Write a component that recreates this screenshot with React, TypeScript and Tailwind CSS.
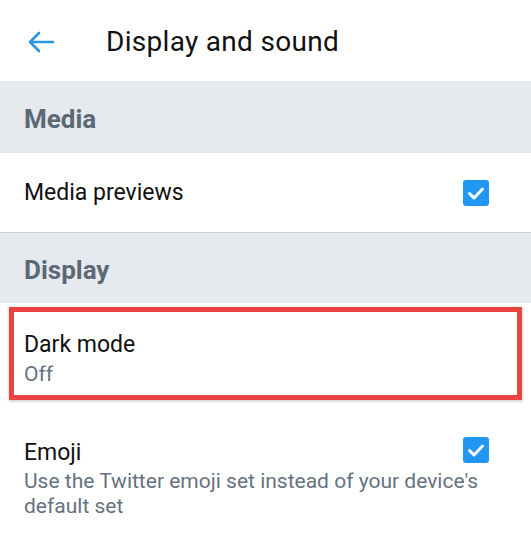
import React from "react";

function Check() {
  return (
    <div className="w-[26px] h-[26px] rounded-[3px] bg-[#2196f3] flex items-center justify-center shrink-0">
      <svg width="22" height="22" viewBox="0 0 22 22" fill="none">
        <path d="M4.5 11.5l4.5 4.5 8.5-9" stroke="white" strokeWidth="3" strokeLinecap="round" strokeLinejoin="round" />
      </svg>
    </div>
  );
}

export default function App() {
  return (
    <div className="w-[531px] h-[540px] bg-white overflow-hidden relative" style={{ fontFamily: "Roboto, 'Noto Sans', sans-serif" }}>
      {/* Header */}
      <div className="h-[81px] flex items-center pt-[2px]">
        <div className="w-[106px] pl-[28px] flex items-center">
          <svg width="27" height="22" viewBox="0 0 27 22" fill="none">
            <path d="M25 11H2.5M11 2L2 11l9 9" stroke="#2a96e0" strokeWidth="2.6" strokeLinecap="round" strokeLinejoin="round" />
          </svg>
        </div>
        <div className="text-[28px] leading-none text-[#111] tracking-[0.3px]">Display and sound</div>
      </div>

      {/* Media section */}
      <div className="h-[72px] bg-[#e6e9ed] flex items-center px-6 pt-[5px]">
        <div className="text-[26px] font-bold text-[#5b6876]">Media</div>
      </div>
      <div className="h-[79px] flex items-center justify-between pl-6 pr-[42px]">
        <div className="text-[23px] text-[#111] pt-[2px]">Media previews</div>
        <Check />
      </div>
      <div className="h-[1px] bg-[#cfd3d7]" />

      {/* Display section */}
      <div className="h-[70px] bg-[#e6e9ed] flex items-center px-6 pt-[5px]">
        <div className="text-[26px] font-bold text-[#5b6876]">Display</div>
      </div>

      <div className="relative pl-6 pt-[27px] pb-[24px]">
        <div className="text-[23px] leading-[30px] text-[#111]">Dark mode</div>
        <div className="text-[21px] leading-[28px] text-[#66727f]">Off</div>
        <div className="absolute left-[9px] top-[4px] w-[513px] h-[93px] border-[5px] border-[#ea4340] shadow-[0_1px_3px_rgba(0,0,0,0.25)]" />
      </div>

      <div className="flex items-start pl-6 pt-[26px]">
        <div className="w-[460px] shrink-0">
          <div className="text-[23px] leading-[30px] text-[#111]">Emoji</div>
          <div className="text-[21px] leading-[25px] text-[#66727f] pt-[1px] whitespace-nowrap">
            Use the Twitter emoji set instead of your device's
            <br />
            default set
          </div>
        </div>
        <div className="ml-[-21px] mt-[-1px]">
          <Check />
        </div>
      </div>
    </div>
  );
}
